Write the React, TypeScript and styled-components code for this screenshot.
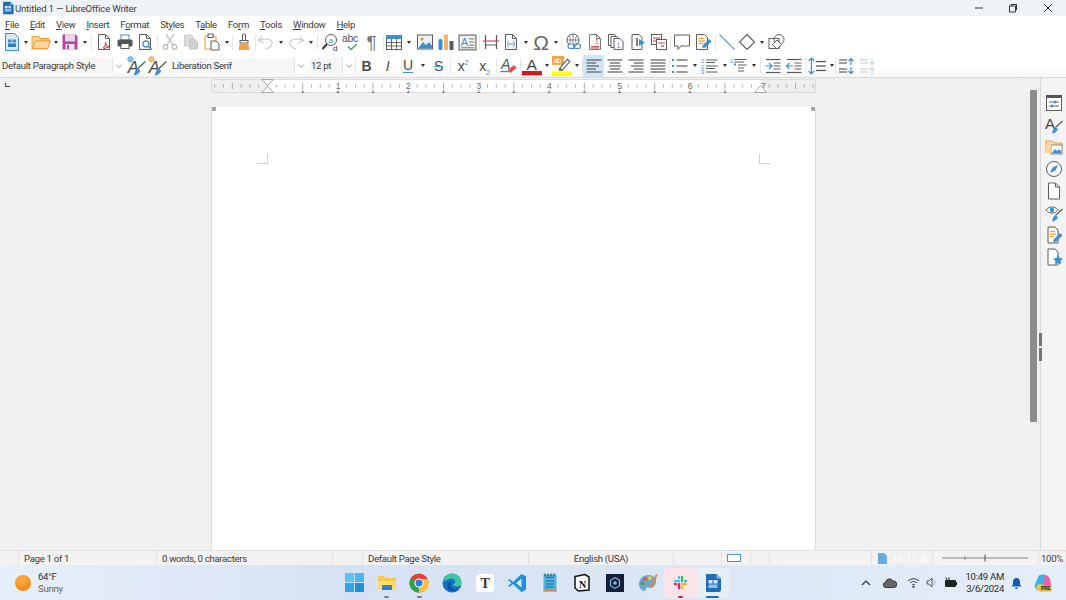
import { FC, ReactNode } from "react";
import styled, { createGlobalStyle } from "styled-components";

const GlobalStyle = createGlobalStyle`
  html, body { margin: 0; padding: 0; background: #fff; }
  body { font-family: Roboto, "Noto Sans", sans-serif; color: #333; letter-spacing: -0.3px; }
`;

const Page = styled.div`
  width: 1066px;
  height: 600px;
  overflow: hidden;
  display: flex;
  flex-direction: column;
`;

const TitleBar = styled.div`
  height: 16px;
  background: #eef3f8;
  display: flex;
  align-items: center;
  padding-left: 1px;
  font-size: 9.6px;
  letter-spacing: -0.2px;
  color: #3c3c3c;
`;
const TitleText = styled.span`
  flex: 1;
`;
const WinButton = styled.span<{ $w: number }>`
  width: ${p => p.$w}px;
  display: flex;
  justify-content: center;
`;

const MenuBar = styled.div`
  height: 16px;
  background: #fff;
  display: flex;
  align-items: center;
  padding-left: 5px;
  gap: 11px;
  font-size: 9.6px;
  color: #3a3a3a;
  u { text-underline-offset: 1px; text-decoration-thickness: 1px; }
`;

const ToolRow = styled.div<{ $h: number; $pb?: number }>`
  height: ${p => p.$h}px;
  box-sizing: border-box;
  display: flex;
  align-items: center;
  padding: 0 0 ${p => p.$pb ?? 0}px 1px;
  background: #fff;
`;
const LastRow = styled(ToolRow)`
  background: linear-gradient(#fff 60%, #f6f6f6);
  border-bottom: 1px solid #d9d9d9;
`;
const Tool = styled.span<{ $w: number; $on?: boolean }>`
  width: ${p => p.$w}px;
  height: 22px;
  flex: none;
  display: flex;
  align-items: center;
  justify-content: center;
  background: ${p => (p.$on ? "#cfe6f7" : "transparent")};
  border-radius: 1px;
`;
const Letter = styled.span<{ $i?: boolean; $b?: boolean }>`
  font-family: "Liberation Sans", sans-serif;
  font-size: 14px;
  line-height: 14px;
  font-weight: ${p => (p.$b ? 700 : 400)};
  font-style: ${p => (p.$i ? "italic" : "normal")};
  color: #4a4a4a;
`;
const Pilcrow = styled(Letter)`
  font-size: 19px;
  line-height: 19px;
  color: #777;
`;
const Omega = styled(Letter)`
  font-size: 21px;
  line-height: 21px;
  color: #666;
`;
const Under = styled(Letter)`
  border-bottom: 1.5px solid #3d8fd1;
  line-height: 13px;
`;
const Strike = styled(Letter)`
  text-decoration: line-through;
  text-decoration-color: #3d8fd1;
`;
const Exp = styled.sup`
  font-size: 7px;
  line-height: 0;
  color: #3d8fd1;
`;
const Sub = styled.sub`
  font-size: 7px;
  line-height: 0;
  color: #3d8fd1;
`;
const Drop = styled.span<{ $w: number }>`
  width: ${p => p.$w}px;
  flex: none;
  display: flex;
  justify-content: center;
  &::before {
    content: "";
    border: 2.5px solid transparent;
    border-top: 3px solid #333;
    border-bottom: 0;
  }
`;
const Sep = styled.span<{ $w: number }>`
  width: ${p => p.$w}px;
  height: 15px;
  flex: none;
  display: flex;
  justify-content: center;
  &::before {
    content: "";
    width: 1px;
    background: #e6e6e6;
  }
`;
const Combo = styled.div<{ $w: number; $gap?: number }>`
  width: ${p => p.$w}px;
  height: 15px;
  flex: none;
  margin-left: ${p => p.$gap ?? 0}px;
  box-sizing: border-box;
  background: #f6f6f6;
  border-radius: 2px;
  display: flex;
  align-items: center;
  font-size: 9.6px;
  color: #3a3a3a;
`;
const ComboText = styled.span`
  flex: 1;
  padding-left: 1px;
  white-space: nowrap;
`;
const ComboArrow = styled.span`
  width: 12px;
  height: 15px;
  background: #fff;
  border-left: 1px solid #e2e2e2;
  display: flex;
  align-items: center;
  justify-content: center;
`;

const Workspace = styled.div`
  height: 472px;
  display: flex;
  position: relative;
  background: #f0f0f0;
`;
const DocArea = styled.div`
  flex: 1;
  display: flex;
  flex-direction: column;
  padding-top: 1px;
`;
const RulerRow = styled.div`
  display: flex;
  height: 14px;
  margin-bottom: 14px;
`;
const TabCorner = styled.div`
  width: 211px;
  padding: 4px 0 0 5px;
  box-sizing: border-box;
  &::before {
    content: "";
    display: block;
    width: 4px;
    height: 3px;
    border-left: 1.5px solid #444;
    border-bottom: 1.5px solid #444;
  }
`;
const Sheet = styled.div`
  flex: 1;
  margin-left: 211px;
  width: 605px;
  box-sizing: border-box;
  background: #fff;
  border-left: 1px solid #dcdcdc;
  border-right: 1px solid #dcdcdc;
  padding: 47px 45px 0;
  display: flex;
  justify-content: space-between;
  align-items: flex-start;
  position: relative;
`;
const Handle = styled.span<{ $right?: boolean }>`
  position: absolute;
  top: 0;
  ${p => (p.$right ? "right: 0" : "left: 0")};
  width: 4px;
  height: 4px;
  background: #a8a8a8;
`;
const CropMark = styled.span<{ $right?: boolean }>`
  width: 10px;
  height: 9px;
  border-bottom: 1px solid #cfcfcf;
  ${p => (p.$right ? "border-left" : "border-right")}: 1px solid #cfcfcf;
`;
const ScrollGutter = styled.div`
  width: 13px;
  padding: 12px 0 0 3px;
  box-sizing: border-box;
`;
const ScrollThumb = styled.div`
  width: 7px;
  height: 332px;
  background: #8c8c8c;
`;
const SideBar = styled.div`
  width: 26px;
  box-sizing: border-box;
  border-left: 1px solid #d9d9d9;
  background: #f3f3f3;
  padding-top: 16px;
  display: flex;
  flex-direction: column;
  align-items: center;
  gap: 4px;
`;
const SideHandle = styled.div`
  position: absolute;
  left: 1039px;
  top: 255px;
  width: 3px;
  height: 28px;
  background: linear-gradient(#777 45%, #eee 45%, #eee 52%, #777 52%);
`;

const StatusBar = styled.div`
  height: 15px;
  box-sizing: border-box;
  background: #f2f2f2;
  border-top: 1px solid #dedede;
  display: flex;
  font-size: 9.6px;
  color: #3a3a3a;
`;
const StatusCell = styled.div<{ $w: number; $center?: boolean }>`
  width: ${p => p.$w}px;
  box-sizing: border-box;
  flex: none;
  display: flex;
  align-items: center;
  justify-content: ${p => (p.$center ? "center" : "flex-start")};
  padding-left: ${p => (p.$center ? 0 : 5)}px;
  border-right: 1px solid #e2e2e2;
  white-space: nowrap;
`;

const TaskBar = styled.div`
  height: 35px;
  background: linear-gradient(90deg, #e6f0fa 0%, #d6e1f3 33%, #dbe6f5 60%, #e3eef9 100%);
  display: flex;
  align-items: center;
`;
const Weather = styled.div`
  width: 338px;
  flex: none;
  display: flex;
  align-items: center;
  padding-left: 15px;
  box-sizing: border-box;
  gap: 7px;
`;
const Sun = styled.span`
  width: 16px;
  height: 16px;
  border-radius: 50%;
  background: radial-gradient(circle at 40% 30%, #fbb03b, #ef7d12);
`;
const WeatherText = styled.div`
  font-size: 9.6px;
  line-height: 12px;
  color: #333;
  small { display: block; font-size: 9.6px; color: #666; }
`;
const Apps = styled.div`
  display: flex;
  width: 392px;
  flex: none;
`;
const AppSlot = styled.div<{ $tint?: string; $bar?: string; $barW?: number }>`
  width: 32.6px;
  height: 30px;
  flex: none;
  display: flex;
  align-items: center;
  justify-content: center;
  border-radius: 3px;
  position: relative;
  background: ${p => p.$tint ?? "transparent"};
  &::after {
    content: "";
    display: ${p => (p.$bar ? "block" : "none")};
    position: absolute;
    bottom: 0;
    left: 50%;
    height: 2px;
    border-radius: 1px;
    width: ${p => p.$barW ?? 5}px;
    margin-left: ${p => -(p.$barW ?? 5) / 2}px;
    background: ${p => p.$bar};
  }
`;
const Tray = styled.div`
  flex: 1;
  display: flex;
  align-items: center;
  padding-left: 124px;
  box-sizing: border-box;
`;
const TraySlot = styled.span<{ $w: number }>`
  width: ${p => p.$w}px;
  flex: none;
  display: flex;
  justify-content: center;
`;
const Clock = styled.div`
  width: 42px;
  flex: none;
  text-align: right;
  white-space: nowrap;
  font-size: 9.6px;
  line-height: 12px;
  color: #2b2b2b;
`;

const I: FC<{ s?: number; children: ReactNode }> = ({ s = 18, children }) => (
  <svg viewBox="0 0 18 18" width={s} height={s} fill="none">{children}</svg>
);
const A: FC<{ s?: number; children: ReactNode }> = ({ s = 20, children }) => (
  <svg viewBox="0 0 20 20" width={s} height={s} fill="none">{children}</svg>
);

const GRAY = "#5c5c5c";
const BLUE = "#3d8fd1";
const PALE = "#d5e8f6";
const OFF = "#b9b9b9";

const Lines: FC<{ rows: number[][]; color?: string; w?: number }> = ({ rows, color = GRAY, w = 1.2 }) => (
  <>{rows.map(([a, b, y], i) => <path key={i} d={`M${a} ${y}H${b}`} stroke={color} strokeWidth={w} />)}</>
);
const Doc: FC<{ fill?: string; stroke?: string }> = ({ fill = "#fff", stroke = GRAY }) => (
  <path d="M3.5 1.5h7l4 4v11h-11zM10.5 1.5v4h4" fill={fill} stroke={stroke} />
);

const NewIcon = () => <I><path d="M2.5.5h9l4 4v13h-13z" fill={PALE} stroke={BLUE} /><rect x="5" y="6.5" width="3.5" height="3" fill={BLUE} /><rect x="9.5" y="6.5" width="3.5" height="3" fill={BLUE} /><rect x="5" y="10.5" width="8" height="3.5" fill="#2f7cc0" /></I>;
const OpenIcon = () => <I s={20}><path d="M1 15V4h6l1.5 2H16v2" fill="#fbd9a8" stroke="#ef9f3c" /><path d="M1 15 4 8h13.5l-2.5 7z" fill="#fdd69d" stroke="#ef9f3c" /></I>;
const SaveIcon = () => <I><path d="M1.5 1.5h13l2 2v13h-15z" fill="#b0479c" /><rect x="4" y="1.5" width="10" height="7" fill="#ecd7e8" /><rect x="4.5" y="11" width="9" height="5.5" fill="#f4e6f1" /><rect x="6" y="12" width="2" height="4" fill="#b0479c" /></I>;
const PdfIcon = () => <I><Doc /><path d="M8 15c2-1 3-5 2.500-6 0 3 2 5 5 5-3 0-6 1-7.500 3" stroke="#d8453c" strokeWidth="1.100" /></I>;
const PrintIcon = () => <I><rect x="5" y="2" width="8" height="5" fill="#fff" stroke={BLUE} /><rect x="1.500" y="6.500" width="15" height="7" rx="1.500" fill="#555" /><rect x="5" y="10.500" width="8" height="5" fill="#fff" stroke="#555" /></I>;
const PreviewIcon = () => <I><Doc /><circle cx="10" cy="11" r="3" fill="#fff" stroke={BLUE} strokeWidth="1.300" /><path d="m12.500 13.500 3 3" stroke={BLUE} strokeWidth="1.600" /></I>;
const CutIcon = () => <I><path d="M5 1l7 11M13 1 6 12" stroke={OFF} strokeWidth="1.200" /><circle cx="4.500" cy="14" r="2.300" stroke={OFF} strokeWidth="1.200" /><circle cx="13.500" cy="14" r="2.300" stroke={OFF} strokeWidth="1.200" /></I>;
const CopyIcon = () => <I><path d="M2.500 2h7l1 1v10h-8z" fill="#ddd" stroke="#ccc" /><path d="M7.500 6h5l3 3v7h-8z" fill="#d0d0d0" stroke="#c6c6c6" /></I>;
const PasteIcon = () => <I><rect x="2" y="3" width="11" height="13" rx="1" fill="#fff" stroke="#ef9f3c" strokeWidth="1.200" /><rect x="5" y="1" width="5" height="3.500" fill="#fff" stroke={GRAY} /><path d="M8 8h5l3 3v6H8z" fill="#fff" stroke={GRAY} /></I>;
const BrushIcon = () => <I><rect x="7.500" y="1" width="3" height="7" rx="1" fill="#fff" stroke={GRAY} /><rect x="5" y="7.500" width="8" height="2.500" fill="#fff" stroke={GRAY} /><path d="M3.500 17c.5-3 1-5 1.500-7h8c.5 2 1 4 1.500 7z" fill="#f3a24a" /></I>;
const UndoIcon: FC<{ flip?: boolean }> = ({ flip }) => <I><g transform={flip ? "matrix(-1 0 0 1 18 0)" : undefined}><path d="M5 3 1.500 7.500 7 10M2 7.500c5-2.500 11-2 13 1.500 1 3-2 6-6 7" stroke="#ccc" strokeWidth="1.200" /></g></I>;
const FindIcon = () => <I><circle cx="10" cy="7" r="5.500" fill="#fff" stroke={GRAY} /><path d="M6 11 1.500 16" stroke="#333" strokeWidth="2" /><text x="7.500" y="9.500" fontSize="8" fill={BLUE} fontFamily="Liberation Sans">a</text><text x="12" y="17.500" fontSize="8" fill="#333" fontFamily="Liberation Sans">d</text></I>;
const SpellIcon = () => <I><text x="0" y="9" fontSize="10.500" fill="#555" fontFamily="Liberation Sans">abc</text><path d="m6 13.500 3 3 6-5.500" stroke="#45a85a" strokeWidth="1.500" /></I>;
const TableIcon = () => <I><rect x="1.500" y="2.500" width="15" height="14" fill="#fff" stroke={GRAY} /><rect x="1" y="2" width="16" height="4" fill={BLUE} /><Lines rows={[[1.500, 16.500, 9.500], [1.500, 16.500, 13]]} w={.9} /><path d="M6.500 6v10.500M11.500 6v10.500" stroke={GRAY} strokeWidth=".9" /></I>;
const ImageIcon = () => <I><rect x="1.500" y="2" width="15" height="14" fill="#eaf4fb" stroke={GRAY} /><circle cx="6" cy="6" r="1.800" fill="#f3a24a" /><path d="M2 15.500 7 9l3 3 3-3 3 4v2.500z" fill={BLUE} /></I>;
const ChartIcon = () => <I><rect x="1.500" y="6" width="4" height="11" rx="1.500" fill={BLUE} /><rect x="7" y="1.500" width="4" height="15.500" rx="1" fill="#f3b35f" /><rect x="12.500" y="8" width="4" height="9" fill={GRAY} /></I>;
const TextBoxIcon = () => <I s={19}><rect x="1" y="2" width="16" height="14" fill="#f4f4f4" stroke={GRAY} /><text x="2.500" y="12.500" fontSize="10.500" fill={BLUE} fontFamily="Liberation Sans">A</text><Lines rows={[[10.500, 15.500, 5.500], [10.500, 15.500, 8.500], [10.500, 15.500, 11.500], [3, 15.500, 14]]} w={.8} /></I>;
const BreakIcon = () => <I><path d="M3.500 2v14M14.500 2v14" stroke={GRAY} strokeWidth="1.300" /><path d="M1 8h16" stroke="#d05a5a" strokeWidth="1.300" /><path d="M3.500 12h11" stroke={GRAY} /></I>;
const FieldIcon = () => <I><Doc /><path d="M7 8c-1 0-1 1-1 2s-.5 1-1 1c.5 0 1 0 1 1s0 2 1 2M11 8c1 0 1 1 1 2s.5 1 1 1c-.5 0-1 0-1 1s0 2-1 2" stroke={BLUE} strokeWidth=".9" /><path d="M7 11h4" stroke={BLUE} /></I>;
const LinkIcon = () => <I><circle cx="8" cy="7" r="6" fill="#fff" stroke={GRAY} /><path d="M2 7h12M8 1v12M4 2.500c2 3 2 6 0 9M12 2.500c-2 3-2 6 0 9" stroke={GRAY} strokeWidth=".7" /><rect x="3" y="11" width="7" height="4.500" rx="2.200" stroke={BLUE} strokeWidth="1.200" fill="#fff" /><rect x="8.500" y="11" width="7" height="4.500" rx="2.200" stroke={BLUE} strokeWidth="1.200" /></I>;
const FootIcon = () => <I><Doc fill="#fff" stroke="#777" /><Lines rows={[[5, 13, 13.500], [5, 13, 15]]} color="#d05a5a" /><text x="9" y="11" fontSize="7" fill="#d05a5a" fontFamily="Liberation Sans">1</text></I>;
const EndIcon = () => <I><path d="M1.500 1.500h6l2 2v9h-8z" fill="#fff" stroke={GRAY} /><path d="M4 3.500h6l2 2v9H4z" fill="#fff" stroke={GRAY} /><path d="M7 5.500h6l3 3v8H7z" fill="#fff" stroke={GRAY} /><text x="9.500" y="15" fontSize="7" fill={BLUE} fontFamily="Liberation Sans">1</text></I>;
const BookmarkIcon = () => <I><path d="M3 1.500h7l3 3v12H3z" fill="#fff" stroke={GRAY} /><path d="M8 5v8" stroke="#555" strokeWidth="1.500" /><path d="m10 6 6 3.500-6 3.500z" fill={BLUE} /></I>;
const CrossIcon = () => <I><rect x="1.500" y="1.500" width="10" height="10" fill="#fff" stroke={GRAY} /><rect x="6.500" y="6.500" width="10" height="10" fill="#fff" stroke={GRAY} /><Lines rows={[[3, 10, 5], [3, 6, 8], [8, 15, 10]]} color="#d05a5a" /><path d="M11 13h3" stroke="#d05a5a" strokeWidth="1.500" /></I>;
const CommentIcon = () => <I><path d="M1.500 2h15v11H8l-3 3.500V13H1.500z" fill="#fff" stroke={GRAY} /></I>;
const TrackIcon = () => <I><path d="M2.500 1.500h8l3 3v12h-11z" fill="#fff8ee" stroke={GRAY} /><Lines rows={[[4.500, 10, 5.500], [4.500, 11, 8], [4.500, 9, 10.500]]} color="#ef9f3c" /><path d="m8 15 1-3 6-6 2.500 2.500-6 6z" fill={BLUE} /></I>;
const LineIcon = () => <I><path d="M1.500 1.500 16.500 16.500" stroke="#5aa0d8" strokeWidth="1.200" /></I>;
const DiamondIcon = () => <I><path d="M9 1.500 16.500 9 9 16.500 1.500 9z" fill="#fff" stroke={GRAY} strokeWidth="1.100" /></I>;
const ShapesIcon = () => <I><rect x="1" y="5.500" width="10" height="10" fill="#fff" stroke={GRAY} /><circle cx="11" cy="6.500" r="5" stroke={GRAY} /><path d="m9 7 4.500 4.500L9 16l-4.500-4.500z" fill="#fff" stroke={GRAY} /></I>;
const Brush: FC<{ c?: string }> = ({ c = BLUE }) => <><path d="M17.500 5 10.500 11.500" stroke={GRAY} strokeWidth="1.200" /><path d="M7 17.500c.5-3 1.500-5 3.500-6.500l2.500 2.500c-1.500 2.500-3 3.500-6 4z" fill={c} /></>;
const StyleAIcon: FC<{ badge: string }> = ({ badge }) => <I s={20}><text x="1.500" y="15" fontSize="15" fill="#444" fontStyle="italic" fontFamily="Liberation Sans">A</text><Brush /><circle cx="4" cy="3" r="2.500" fill={badge} fillOpacity=".7" stroke={badge} strokeWidth=".6" /></I>;
const ClearIcon = () => <I><text x="2" y="12" fontSize="14" fill="#555" fontStyle="italic" fontFamily="Liberation Sans">A</text><path d="M1.500 14.500h9" stroke={BLUE} strokeWidth="1.400" /><path d="m9 13 6-5 2.500 3-6 5z" fill="#e0505a" /></I>;
const FontColorIcon = () => <I s={20}><text x="4" y="12.500" fontSize="14" fill="#444" fontFamily="Liberation Sans">A</text><rect x="0" y="13.500" width="18" height="4" fill="#c51f1f" /></I>;
const HighlightIcon = () => <I s={20}><rect x="0" y="0" width="11" height="8" fill="#f3a24a" /><text x="1.500" y="6.500" fontSize="6.500" fill="#fff" fontFamily="Liberation Sans">ab</text><path d="m7 11 7-8 2 2-7 8z" fill="#fff" stroke={GRAY} /><path d="m6 13 1-2 2 2z" fill="#333" /><rect x="0" y="14" width="18" height="4" fill="#ffff00" /></I>;
const AlignIcon: FC<{ kind: "l" | "c" | "r" | "j" }> = ({ kind }) => {
  const short = { l: [1.500, 11], c: [4, 14], r: [7, 16.500], j: [1.500, 16.500] }[kind];
  const mid = { l: [1.500, 14], c: [3, 15], r: [4, 16.500], j: [1.500, 16.500] }[kind];
  return <I><Lines rows={[[1.500, 16.500, 3], [short[0], short[1], 6], [mid[0], mid[1], 9], [short[0], short[1], 12], [1.500, 16.500, 15]]} /></I>;
};
const BulletIcon = () => <I><Lines rows={[[1, 3, 3], [1, 3, 9], [1, 3, 15]]} color={BLUE} w={2} /><Lines rows={[[5.500, 16.500, 3], [5.500, 16.500, 9], [5.500, 16.500, 15]]} /></I>;
const NumberIcon = () => <I><text x="0" y="6" fontSize="6" fill={BLUE} fontFamily="Liberation Sans">1</text><text x="0" y="11.500" fontSize="6" fill={BLUE} fontFamily="Liberation Sans">2</text><text x="0" y="17" fontSize="6" fill={BLUE} fontFamily="Liberation Sans">3</text><Lines rows={[[5, 16.500, 3], [5, 14, 5.500], [5, 16.500, 9], [5, 14, 11.500], [5, 16.500, 15]]} w={1} /></I>;
const OutlineIcon = () => <I><text x="0" y="6" fontSize="6" fill={BLUE} fontFamily="Liberation Sans">1</text><path d="M4 7.500h2" stroke={BLUE} strokeWidth="2" /><Lines rows={[[4.500, 16.500, 2.500], [4.500, 14, 5], [8, 16.500, 8], [8, 14, 11], [8, 14, 14]]} w={1} /></I>;
const IndentIcon: FC<{ out?: boolean }> = ({ out }) => <I><Lines rows={[[2, 16.500, 2.500], [2, 16.500, 15.500]]} /><Lines rows={[[9.500, 16.500, 6], [9.500, 16.500, 9], [9.500, 16.500, 12]]} w={1} /><path d={out ? "M8 9H1.500M4.500 6 1.500 9l3 3" : "M1.500 9H8M5 6l3 3-3 3"} stroke={BLUE} strokeWidth="1.100" /></I>;
const SpacingIcon = () => <I s={20}><path d="M4 2v14M1.500 4.500 4 2l2.500 2.500M1.500 13.500 4 16l2.500-2.500" stroke={BLUE} strokeWidth="1.100" /><Lines rows={[[8, 17, 5], [8, 17, 9], [8, 17, 13]]} /></I>;
const ParaIcon: FC<{ off?: boolean }> = ({ off }) => {
  const c = off ? "#cfcfcf" : GRAY, b = off ? "#c9d9e4" : BLUE;
  return <I><Lines rows={[[1, 9, 3], [1, 9, 6], [1, 9, 12], [1, 9, 15]]} color={c} /><path d={off ? "M13 1v6.500M10.500 5 13 7.500 15.500 5M13 17v-6.500M10.500 13 13 10.500 15.500 13" : "M13 8V1.500M10.500 4 13 1.500 15.500 4M13 10v6.500M10.500 14 13 16.500 15.500 14"} stroke={b} strokeWidth="1.200" /></I>;
};

const PropIcon = () => <I><rect x="1.500" y="1.500" width="15" height="15" fill="#fff" stroke={GRAY} /><rect x="1" y="1" width="16" height="3" fill="#555" /><path d="M4 8h10M4 12h10" stroke={GRAY} /><path d="M10 6.500v3M7 10.500v3" stroke={BLUE} strokeWidth="1.600" /></I>;
const SideStyles = () => <I><text x="0" y="13" fontSize="15" fill="#444" fontFamily="Liberation Sans">A</text><Brush /></I>;
const SideGallery = () => <I><path d="M1 15V3h6l1.500 2H17v3" fill="#fbd9a8" stroke="#ef9f3c" /><rect x="6" y="7" width="11" height="9" fill="#fff" stroke="#888" /><path d="M6.500 15.500 10 11l2 2 2-2 2.500 3v1.500z" fill={BLUE} /><rect x="1" y="7" width="5" height="8" fill="#fdd69d" /></I>;
const SideNav = () => <I><circle cx="9" cy="9" r="7.500" fill="#fff" stroke={GRAY} /><path d="M13 5 10.500 10.500 5 13 7.500 7.500z" fill={BLUE} /></I>;
const SidePage = () => <I><path d="M3.500 1h7l4 4v12h-11zM10.500 1v4h4" fill="#fff" stroke={GRAY} /></I>;
const SideEye = () => <I><path d="M1 6c3-4 9-4 12 0-3 4-9 4-12 0z" fill="#fff" stroke={GRAY} /><circle cx="7" cy="6" r="2.300" fill={BLUE} /><Brush /></I>;
const SideEdit = () => <I><path d="M3 1h7l3 3v13H3z" fill="#fff8ee" stroke={GRAY} /><Lines rows={[[5, 10, 5.500], [5, 11, 8], [5, 9, 10.500]]} color="#ef9f3c" /><path d="m8 16 1-3 6-6 2.500 2.500-6 6z" fill={BLUE} /></I>;
const SideStar = () => <I><path d="M3 1h7l3 3v13H3z" fill="#fff" stroke={GRAY} /><path d="m13 7 1.500 3 3.500.5-2.500 2.500.5 3.500-3-1.500-3 1.500.5-3.500L8 10.500l3.500-.5z" fill={BLUE} /></I>;

const WinLogo = () => <A s={19}><g fill="#2fa5e6"><rect x="0" y="0" width="9.500" height="9.500" fill="#5cc3f3" /><rect x="10.500" y="0" width="9.500" height="9.500" fill="#4ab8ef" /><rect x="0" y="10.500" width="9.500" height="9.500" /><rect x="10.500" y="10.500" width="9.500" height="9.500" fill="#1e8fd8" /></g></A>;
const FilesLogo = () => <A><path d="M1 17V3h6l2 2h10v12z" fill="#f7c94b" /><path d="M1 8h18v9H1z" fill="#fcdc6c" /><rect x="5" y="12" width="10" height="5" fill="#2f80c8" /></A>;
const ChromeLogo = () => <A><circle cx="10" cy="10" r="9.500" fill="#e34133" /><path d="M10 10 1.800 5.200A9.500 9.500 0 0 0 10 19.500z" fill="#2ea44f" /><path d="M10 6h8.700A9.500 9.500 0 0 1 10 19.500L10 10z" fill="#f9c22e" /><circle cx="10" cy="10" r="4.600" fill="#fff" /><circle cx="10" cy="10" r="3.500" fill="#2a7de1" /></A>;
const EdgeLogo = () => <A><circle cx="10" cy="10" r="9.500" fill="#1473c9" /><path d="M1 9C2 3 7 .5 10.500.5 16 .5 19.500 5 19.500 10c0 2-2 3.500-4.500 3.500-2.500 0-4-1-4-2.500 2 0 2.500-1 2-2.500C13 6 10 5 7.500 6 4.500 7 2 8 1 9z" fill="#3ec6a5" /><path d="M5 12c0 4 4 7 9 6 1 0 2-1 3-2-3 1.500-6 .5-7.500-1.500C8.500 13 8.500 10 10 9 7 8.500 5 10 5 12z" fill="#0b559f" /></A>;
const TyporaLogo = () => <A><rect x="1" y="1" width="18" height="18" rx="3" fill="#fff" /><text x="10" y="15" fontSize="14" textAnchor="middle" fontWeight="700" fill="#333" fontFamily="Liberation Serif">T</text></A>;
const CodeLogo = () => <A><path d="M14.500 1 19 3.200v13.600L14.500 19 6 11l-3.500 3L1 13l3.500-3L1 7l1.500-1L6 9z" fill="#1f8fe0" /><path d="M14.500 5.500 9 10l5.500 4.500z" fill="#dbe6f5" /></A>;
const NotesLogo = () => <A><rect x="3.500" y="1.500" width="13" height="17" fill="#4fb3dc" /><path d="M6 4.500h8M6 8h8M6 11h8M6 14h8" stroke="#1a6f9a" /><rect x="3.500" y="16" width="13" height="2.500" fill="#e78a3c" /><path d="M5 .5v3M8 .5v3M11 .5v3M14 .5v3" stroke="#245" /></A>;
const NotionLogo = () => <A><path d="M3 3.500 13 1.500l4 2.500v13L6.500 18 3 15z" fill="#fff" stroke="#111" strokeWidth="1.500" /><text x="10.500" y="14.500" fontSize="10" textAnchor="middle" fontWeight="700" fill="#111" fontFamily="Liberation Serif">N</text></A>;
const DarkLogo = () => <A s={18}><rect width="20" height="20" fill="#12213a" /><path d="M10 4 15 7v6l-5 3-5-3V7z" stroke="#8fb6de" strokeWidth="1.300" /><circle cx="10" cy="10" r="2" fill="#8fb6de" /></A>;
const PaletteLogo = () => <A><path d="M10 2C5 2 1 6 1 11c0 4 3 7 5 7 2.500 0 1.500-3 3-3.500 2-.5 4 1 6-.5 3-2 4-6 2-9C16 3 13 2 10 2z" fill="#6aa7c9" /><circle cx="7" cy="6" r="2" fill="#e85d4a" /><circle cx="12" cy="5" r="2" fill="#f3c13a" /><circle cx="4.500" cy="10.500" r="2" fill="#3ea66b" /><path d="M12 14 18 1l1.500 1L14 15z" fill="#d68a3a" /></A>;
const SlackLogo = () => (
  <A s={15}>
    <rect x="1" y="6.500" width="8.500" height="3" rx="1.500" fill="#36c5f0" /><rect x="6.500" y="1" width="3" height="4.500" rx="1.500" fill="#36c5f0" />
    <rect x="10.500" y="1" width="3" height="8.500" rx="1.500" fill="#2eb67d" /><rect x="14.500" y="6.500" width="4.500" height="3" rx="1.500" fill="#2eb67d" />
    <rect x="10.500" y="10.500" width="8.500" height="3" rx="1.500" fill="#ecb22e" /><rect x="10.500" y="14.500" width="3" height="4.500" rx="1.500" fill="#ecb22e" />
    <rect x="6.500" y="10.500" width="3" height="8.500" rx="1.500" fill="#e01e5a" /><rect x="1" y="10.500" width="4.500" height="3" rx="1.500" fill="#e01e5a" />
  </A>
);
const WriterLogo: FC<{ s?: number }> = ({ s = 20 }) => <A s={s}><path d="M3 1h10.500L18 5.500V17a2 2 0 0 1-2 2H3z" fill="#1f6db5" /><path d="M13.500 1V5.500H18" fill="#7fb6e2" /><rect x="5.500" y="7" width="4" height="3.500" fill="#cfe4f5" /><rect x="10.500" y="7" width="4" height="3.500" fill="#cfe4f5" /><rect x="5.500" y="11.500" width="9" height="3.500" fill="#8fc1e8" /></A>;

const Ruler = () => {
  const inch = 70.4, left = 56.5;
  const ticks: number[] = [];
  for (let k = -6; k <= 62; k++) ticks.push(k);
  return (
    <svg width="605" height="14" viewBox="0 0 605 14">
      <rect x=".5" y=".5" width="604" height="13" rx="1.500" fill="#efefef" stroke="#dcdcdc" />
      <rect x={left} y="1" width={493} height="12" fill="#fff" />
      {ticks.map(k => {
        const x = left + (k * inch) / 8;
        if (x < 2 || x > 603) return null;
        if (k % 8 === 0 && k > 0) return <text key={k} x={k === 56 ? x + 3 : x} y="10" fontSize="8.500" textAnchor="middle" fill="#666" fontFamily="Liberation Sans">{k / 8}</text>;
        return <path key={k} d={k % 4 === 0 ? `M${x} 4v6` : `M${x} 5.500v3`} stroke="#aaa" />;
      })}
      {[1, 2, 3, 4, 5, 6, 7, 8, 9, 10, 11, 12, 13].map(k => (
        <path key={k} d={`M${left + k * 35.2} 11v2.500M${left + k * 35.2 - 1.500} 13.500h3`} stroke="#666" strokeWidth=".8" />
      ))}
      <path d={`M${left - 6} 0.500h12L${left} 6.500zM${left - 6} 13.500h12L${left} 7.500z`} fill="#fff" stroke="#aaa" />
      <path d={`M${left + 493 - 6} 13.500h12L${left + 493} 6.500z`} fill="#fff" stroke="#aaa" />
    </svg>
  );
};

const ZoomSlider = () => (
  <svg width="100" height="12" viewBox="0 0 100 12">
    <path d="M4 6h86" stroke="#888" />
    <path d="M27 4v4" stroke="#888" />
    <path d="M47 2.500v7" stroke="#666" strokeWidth="1.200" />
  </svg>
);
const ViewIcons = () => (
  <svg width="54" height="12" viewBox="0 0 54 12">
    <path d="M1 1h6l3 3v8H1z" fill="#6aa9e0" />
    <path d="M15 2h5v9h-5zM21 2h5v9h-5zM30 2h4v9h-4zM35 2h4v9h-4zM43 2h6v9h-6z" fill="#f7f7f7" stroke="#eee" />
  </svg>
);

const menu: [string, string, string][] = [
  ["", "F", "ile"], ["", "E", "dit"], ["", "V", "iew"], ["", "I", "nsert"], ["F", "o", "rmat"],
  ["St", "y", "les"], ["T", "a", "ble"], ["Fo", "r", "m"], ["", "T", "ools"], ["", "W", "indow"], ["", "H", "elp"],
];

const SmallArrow = () => <svg width="8" height="6" viewBox="0 0 8 6"><path d="M1 1.500 4 4.500 7 1.500" stroke="#999" fill="none" /></svg>;

const apps: { logo: ReactNode; tint?: string; bar?: string; barW?: number }[] = [
  { logo: <WinLogo /> },
  { logo: <FilesLogo />, bar: "#7a7f87" },
  { logo: <ChromeLogo />, bar: "#7a7f87" },
  { logo: <EdgeLogo /> },
  { logo: <TyporaLogo /> },
  { logo: <CodeLogo /> },
  { logo: <NotesLogo /> },
  { logo: <NotionLogo /> },
  { logo: <DarkLogo /> },
  { logo: <PaletteLogo /> },
  { logo: <SlackLogo />, tint: "#f7e3e8", bar: "#c8283e" },
  { logo: <WriterLogo />, tint: "#e6eef6", bar: "#1f6db5", barW: 13 },
];

export default function App() {
  return (
    <Page>
      <GlobalStyle />
      <TitleBar>
        <WriterLogo s={14} />
        <TitleText>Untitled 1 — LibreOffice Writer</TitleText>
        <WinButton $w={34}><svg width="10" height="10" viewBox="0 0 10 10"><path d="M1 5h8" stroke="#333" /></svg></WinButton>
        <WinButton $w={34}><svg width="10" height="10" viewBox="0 0 10 10"><path d="M1.500 3h6v6h-6zM3 3V1.500h5.500V7H7.500" stroke="#333" fill="none" /></svg></WinButton>
        <WinButton $w={36}><svg width="10" height="10" viewBox="0 0 10 10"><path d="m1 1 8 8M9 1 1 9" stroke="#333" /></svg></WinButton>
      </TitleBar>

      <MenuBar>
        {menu.map(([a, b, c]) => <span key={a + b + c}>{a}<u>{b}</u>{c}</span>)}
      </MenuBar>

      <ToolRow $h={22} $pb={2}>
        <Tool $w={21}><NewIcon /></Tool><Drop $w={8} />
        <Tool $w={21}><OpenIcon /></Tool><Drop $w={9} />
        <Tool $w={20}><SaveIcon /></Tool><Drop $w={9} />
        <Sep $w={4} />
        <Tool $w={21}><PdfIcon /></Tool>
        <Tool $w={21}><PrintIcon /></Tool>
        <Tool $w={20}><PreviewIcon /></Tool>
        <Sep $w={4} />
        <Tool $w={21}><CutIcon /></Tool>
        <Tool $w={21}><CopyIcon /></Tool>
        <Tool $w={21}><PasteIcon /></Tool><Drop $w={9} />
        <Sep $w={2} />
        <Tool $w={21}><BrushIcon /></Tool>
        <Sep $w={2} />
        <Tool $w={20}><UndoIcon /></Tool><Drop $w={10} />
        <Tool $w={20}><UndoIcon flip /></Tool><Drop $w={10} />
        <Sep $w={3} />
        <Tool $w={21}><FindIcon /></Tool>
        <Tool $w={21}><SpellIcon /></Tool>
        <Tool $w={21}><Pilcrow>¶</Pilcrow></Tool>
        <Sep $w={2} />
        <Tool $w={20}><TableIcon /></Tool><Drop $w={10} />
        <Tool $w={21}><ImageIcon /></Tool>
        <Tool $w={21}><ChartIcon /></Tool>
        <Tool $w={22}><TextBoxIcon /></Tool>
        <Sep $w={2} />
        <Tool $w={21}><BreakIcon /></Tool>
        <Tool $w={20}><FieldIcon /></Tool><Drop $w={10} />
        <Tool $w={20}><Omega>Ω</Omega></Tool><Drop $w={9} />
        <Sep $w={3} />
        <Tool $w={21}><LinkIcon /></Tool>
        <Tool $w={21}><FootIcon /></Tool>
        <Tool $w={22}><EndIcon /></Tool>
        <Tool $w={21}><BookmarkIcon /></Tool>
        <Tool $w={21}><CrossIcon /></Tool>
        <Sep $w={2} />
        <Tool $w={21}><CommentIcon /></Tool>
        <Tool $w={22}><TrackIcon /></Tool>
        <Sep $w={3} />
        <Tool $w={20}><LineIcon /></Tool>
        <Tool $w={20}><DiamondIcon /></Tool><Drop $w={10} />
        <Tool $w={20}><ShapesIcon /></Tool>
      </ToolRow>

      <LastRow $h={24}>
        <Combo $w={124}><ComboText>Default Paragraph Style</ComboText><ComboArrow><SmallArrow /></ComboArrow></Combo>
        <Tool $w={21}><StyleAIcon badge="#5aa6dc" /></Tool>
        <Tool $w={21}><StyleAIcon badge="#f3a24a" /></Tool>
        <Combo $w={136} $gap={4}><ComboText>Liberation Serif</ComboText><ComboArrow><SmallArrow /></ComboArrow></Combo>
        <Combo $w={45} $gap={3}><ComboText>12 pt</ComboText><ComboArrow><SmallArrow /></ComboArrow></Combo>
        <Sep $w={1} />
        <Tool $w={21}><Letter $b>B</Letter></Tool>
        <Tool $w={21}><Letter $i>I</Letter></Tool>
        <Tool $w={20}><Under>U</Under></Tool><Drop $w={10} />
        <Tool $w={21}><Strike>S</Strike></Tool>
        <Sep $w={3} />
        <Tool $w={22}><Letter>x<Exp>2</Exp></Letter></Tool>
        <Tool $w={21}><Letter>x<Sub>2</Sub></Letter></Tool>
        <Sep $w={2} />
        <Tool $w={22}><ClearIcon /></Tool>
        <Sep $w={2} />
        <Tool $w={22}><FontColorIcon /></Tool><Drop $w={7} />
        <Tool $w={23}><HighlightIcon /></Tool><Drop $w={8} />
        <Sep $w={2} />
        <Tool $w={21} $on><AlignIcon kind="l" /></Tool>
        <Tool $w={21}><AlignIcon kind="c" /></Tool>
        <Tool $w={22}><AlignIcon kind="r" /></Tool>
        <Tool $w={21}><AlignIcon kind="j" /></Tool>
        <Sep $w={2} />
        <Tool $w={20}><BulletIcon /></Tool><Drop $w={10} />
        <Tool $w={20}><NumberIcon /></Tool><Drop $w={9} />
        <Tool $w={20}><OutlineIcon /></Tool><Drop $w={9} />
        <Sep $w={4} />
        <Tool $w={21}><IndentIcon /></Tool>
        <Tool $w={21}><IndentIcon out /></Tool>
        <Sep $w={2} />
        <Tool $w={22}><SpacingIcon /></Tool><Drop $w={7} />
        <Sep $w={1} />
        <Tool $w={21}><ParaIcon /></Tool>
        <Tool $w={21}><ParaIcon off /></Tool>
      </LastRow>

      <Workspace>
        <DocArea>
          <RulerRow><TabCorner /><Ruler /></RulerRow>
          <Sheet>
            <Handle /><Handle $right />
            <CropMark /><CropMark $right />
          </Sheet>
        </DocArea>
        <ScrollGutter><ScrollThumb /></ScrollGutter>
        <SideBar>
          <PropIcon /><SideStyles /><SideGallery /><SideNav /><SidePage /><SideEye /><SideEdit /><SideStar />
        </SideBar>
        <SideHandle />
      </Workspace>

      <StatusBar>
        <StatusCell $w={19} />
        <StatusCell $w={138}>Page 1 of 1</StatusCell>
        <StatusCell $w={176}>0 words, 0 characters</StatusCell>
        <StatusCell $w={30} />
        <StatusCell $w={166}>Default Page Style</StatusCell>
        <StatusCell $w={145} $center>English (USA)</StatusCell>
        <StatusCell $w={48} />
        <StatusCell $w={29}><svg width="14" height="8" viewBox="0 0 14 8"><rect x=".5" y=".5" width="13" height="7" fill="#fff" stroke="#4e93cc" /></svg></StatusCell>
        <StatusCell $w={19} />
        <StatusCell $w={102} />
        <StatusCell $w={61}><ViewIcons /></StatusCell>
        <StatusCell $w={106}><ZoomSlider /></StatusCell>
        <StatusCell $w={27} $center>100%</StatusCell>
      </StatusBar>

      <TaskBar>
        <Weather>
          <Sun />
          <WeatherText>64°F<small>Sunny</small></WeatherText>
        </Weather>
        <Apps>
          {apps.map((a, i) => <AppSlot key={i} $tint={a.tint} $bar={a.bar} $barW={a.barW}>{a.logo}</AppSlot>)}
        </Apps>
        <Tray>
          <TraySlot $w={24}><svg width="10" height="6" viewBox="0 0 10 6"><path d="M1 5 5 1l4 4" stroke="#333" fill="none" strokeWidth="1.100" /></svg></TraySlot>
          <TraySlot $w={24}><svg width="14" height="10" viewBox="0 0 14 10"><path d="M3 9.500a2.500 2.500 0 0 1-.5-5A4 4 0 0 1 10 3a3.200 3.200 0 0 1 1 6.500z" fill="#666" stroke="#222" strokeWidth=".8" /></svg></TraySlot>
          <TraySlot $w={23}><svg width="13" height="11" viewBox="0 0 13 11" fill="none" stroke="#333"><path d="M1 4c3-3 8-3 11 0M3 6c2-2 5-2 7 0M5 8c1-1 2-1 3 0" /><circle cx="6.500" cy="9.800" r=".7" fill="#333" /></svg></TraySlot>
          <TraySlot $w={13}><svg width="12" height="11" viewBox="0 0 12 11" fill="none" stroke="#444" strokeWidth=".9"><path d="M1 4h2l3-3v9L3 7H1z" /><path d="M8 3.500c1 1 1 3 0 4" stroke="#999" /></svg></TraySlot>
          <TraySlot $w={24}><svg width="13" height="11" viewBox="0 0 13 11"><rect x="1" y="3" width="11" height="7" rx="1" fill="#222" /><path d="M3 3 2 .5M5 3V.5" stroke="#222" /><rect x="12" y="5" width="1" height="3" fill="#222" /></svg></TraySlot>
          <Clock>10:49 AM<br />3/6/2024</Clock>
          <TraySlot $w={24}><svg width="11" height="12" viewBox="0 0 11 12"><path d="M5.500 1C3 1 2 3 2 5v2.500L.5 9.500h10L9 7.500V5c0-2-1-4-3.500-4z" fill="#0f5fb5" /><path d="M4 10.500h3a1.500 1.500 0 0 1-3 0z" fill="#0f5fb5" /></svg></TraySlot>
          <TraySlot $w={30}><A s={18}><path d="M5 2c3-2 7-2 9 0l4 9c1 3-1 7-5 7H6c-4 0-6-3-5-6z" fill="#39b6e8" /><path d="M12 1c3 0 5 2 6 5l1 6c0 3-3 5-6 5l-3-9z" fill="#e95fa6" /><path d="M3 13c3-3 7-2 9 0 1 2 2 4 0 6H5c-2 0-3-3-2-6z" fill="#f6c043" /><rect x="6.500" y="12.500" width="13" height="7" rx="1" fill="#e3b33a" /><text x="13" y="18" fontSize="5.500" textAnchor="middle" fontWeight="700" fill="#222" fontFamily="Liberation Sans">PRE</text></A></TraySlot>
        </Tray>
      </TaskBar>
    </Page>
  );
}
